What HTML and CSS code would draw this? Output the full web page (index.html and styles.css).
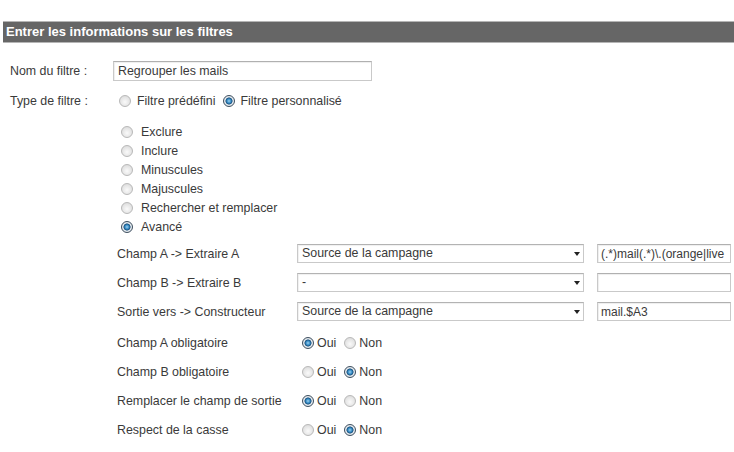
FILE: index.html
```html
<!DOCTYPE html>
<html lang="fr">
<head>
  <meta charset="UTF-8">
  <title>Filtres</title>
  <link rel="stylesheet" href="styles.css">
</head>
<body>

  <div class="section-title">Entrer les informations sur les filtres</div>

  <div class="form">
    <div class="row">
      <span class="label">Nom du filtre :</span>
      <input class="text name" type="text" value="Regrouper les mails">
    </div>

    <div class="row type">
      <span class="label">Type de filtre :</span>
      <label class="opt"><input type="radio" name="type"> Filtre prédéfini</label>
      <label class="opt"><input type="radio" name="type" checked> Filtre personnalisé</label>
    </div>

    <div class="choices">
      <label><input type="radio" name="custom"> Exclure</label>
      <label><input type="radio" name="custom"> Inclure</label>
      <label><input type="radio" name="custom"> Minuscules</label>
      <label><input type="radio" name="custom"> Majuscules</label>
      <label><input type="radio" name="custom"> Rechercher et remplacer</label>
      <label><input type="radio" name="custom" checked> Avancé</label>
    </div>

    <div class="advanced">
      <div class="adv-row">
        <span class="adv-label">Champ A -&gt; Extraire A</span>
        <span class="select">Source de la campagne</span>
        <input class="text small" type="text" value="(.*)mail(.*)\.(orange|live">
      </div>
      <div class="adv-row">
        <span class="adv-label">Champ B -&gt; Extraire B</span>
        <span class="select">-</span>
        <input class="text small" type="text" value="">
      </div>
      <div class="adv-row">
        <span class="adv-label">Sortie vers -&gt; Constructeur</span>
        <span class="select">Source de la campagne</span>
        <input class="text small" type="text" value="mail.$A3">
      </div>
      <div class="adv-row gap">
        <span class="adv-label">Champ A obligatoire</span>
        <span class="yesno">
          <label><input type="radio" name="a" checked> Oui</label>
          <label><input type="radio" name="a"> Non</label>
        </span>
      </div>
      <div class="adv-row">
        <span class="adv-label">Champ B obligatoire</span>
        <span class="yesno">
          <label><input type="radio" name="b"> Oui</label>
          <label><input type="radio" name="b" checked> Non</label>
        </span>
      </div>
      <div class="adv-row">
        <span class="adv-label">Remplacer le champ de sortie</span>
        <span class="yesno">
          <label><input type="radio" name="r" checked> Oui</label>
          <label><input type="radio" name="r"> Non</label>
        </span>
      </div>
      <div class="adv-row">
        <span class="adv-label">Respect de la casse</span>
        <span class="yesno">
          <label><input type="radio" name="c"> Oui</label>
          <label><input type="radio" name="c" checked> Non</label>
        </span>
      </div>
    </div>
  </div>

</body>
</html>
```

FILE: styles.css
```css
body {
  margin: 0;
  padding: 0;
  background: #fff;
  font-family: 'Liberation Sans', Arial, sans-serif;
  font-size: 12.4px;
  color: #3a3a3a;
  overflow: hidden;
}

.section-title {
  margin: 21px 0 0 3px;
  height: 20px;
  line-height: 20px;
  padding-left: 3px;
  background: #666;
  border-top: 1px solid #b5b5b5;
  border-bottom: 1px solid #b5b5b5;
  color: #fff;
  font-weight: bold;
  font-size: 13px;
}

.form {
  padding-left: 10px;
}

.row {
  display: flex;
  align-items: center;
  height: 20px;
  margin-top: 18px;
}

.row.type {
  margin-top: 10px;
}

.label {
  width: 103px;
}

input.text {
  box-sizing: border-box;
  height: 20px;
  margin: 0;
  padding: 0 4px;
  border: 1px solid #c9c9c9;
  border-top-color: #b0b0b0;
  box-shadow: inset 1px 1px 1px #eee;
  font-family: inherit;
  font-size: 12.4px;
  color: #3a3a3a;
  outline: none;
}

input.name {
  width: 259px;
}

input[type="radio"] {
  appearance: none;
  -webkit-appearance: none;
  box-sizing: border-box;
  width: 12px;
  height: 12px;
  margin: 0 3px 0 0;
  border-radius: 50%;
  border: 1px solid #b8b8b8;
  background: radial-gradient(circle at 50% 60%, #fafafa 0, #e4e4e4 60%, #d2d2d2 100%);
  vertical-align: middle;
  flex: none;
}

input[type="radio"]:checked {
  border-color: #3d4e5e;
  background: radial-gradient(circle at 50% 50%, #9fd2f0 0, #2f86c0 30%, #1c4f7a 45%, #e9eef2 55%, #c9d1d8 100%);
}

.opt {
  display: flex;
  align-items: center;
  margin-left: 6px;
}

.opt + .opt {
  margin-left: 7px;
}

.opt input {
  margin-right: 6px;
}

.choices {
  display: flex;
  flex-direction: column;
  margin: 11px 0 0 111px;
}

.choices label {
  display: flex;
  align-items: center;
  height: 19px;
}

.choices input {
  margin-right: 8px;
}

.advanced {
  margin: 3px 0 0 107px;
}

.adv-row {
  display: flex;
  align-items: center;
  height: 29px;
}

.adv-row.gap {
  height: 31px;
  padding-top: 2px;
  box-sizing: border-box;
}

.adv-label {
  width: 180px;
}

.select {
  position: relative;
  box-sizing: border-box;
  width: 287px;
  height: 19px;
  line-height: 17px;
  padding-left: 4px;
  border: 1px solid #c9c9c9;
  border-top-color: #b3b3b3;
  box-shadow: inset 1px 1px 1px #f0f0f0;
  margin-right: 13px;
}

.select::after {
  content: "";
  position: absolute;
  right: 3px;
  top: 7px;
  border-left: 3px solid transparent;
  border-right: 3px solid transparent;
  border-top: 4px solid #222;
}

input.small {
  width: 134px;
  height: 19px;
  font-size: 12px;
  padding: 0 3px;
}

.yesno {
  display: flex;
  align-items: center;
  padding-left: 5px;
}

.yesno input {
  margin-right: 3px;
}

.yesno label {
  display: flex;
  align-items: center;
  margin-right: 8px;
}
```
